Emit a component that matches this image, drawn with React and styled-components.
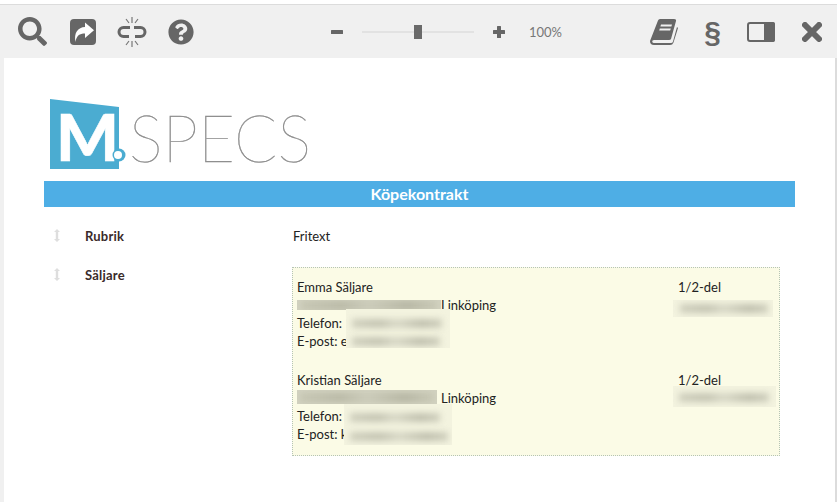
import styled, { createGlobalStyle } from 'styled-components'
import { FaSearch, FaQuestionCircle } from 'react-icons/fa'

const GlobalStyle = createGlobalStyle`
  html, body {
    margin: 0;
    padding: 0;
    background: #fff;
    overflow: hidden;
  }
  body {
    font-family: Lato, "Open Sans", sans-serif;
    font-size: 13px;
    color: #222;
  }
`

const Page = styled.div`
  width: 837px;
  height: 502px;
  display: flex;
  flex-direction: column;
  box-sizing: border-box;
  padding-top: 4px;
`

const Toolbar = styled.div`
  height: 54px;
  flex: none;
  box-sizing: border-box;
  border-top: 1px solid #dcdcdc;
  background: #f0f0f0;
  display: grid;
  grid-template-columns: 313px auto 1fr;
  align-items: center;
  padding: 0 15px 0 18px;
  color: #666;
`

const ToolGroup = styled.div`
  display: flex;
  align-items: center;
  gap: ${p => p.$gap}px;
  justify-content: ${p => p.$end ? 'flex-end' : 'flex-start'};
`

const ZoomGroup = styled.div`
  display: flex;
  align-items: center;
`

const Track = styled.div`
  width: 112px;
  height: 2px;
  margin: 0 19px;
  background: #e2e2e2;
  display: flex;
  align-items: center;
  padding-left: 52px;
  box-sizing: border-box;
`

const Thumb = styled.div`
  flex: none;
  width: 8px;
  height: 14px;
  background: #6a6a6a;
`

const Percent = styled.span`
  font-size: 13px;
  color: #777;
  margin-left: 24px;
`

const Paragraph = styled.span`
  width: 15px;
  display: flex;
  justify-content: center;
  font-family: "Liberation Sans", Arial, sans-serif;
  font-size: 30px;
  font-weight: 700;
  line-height: 30px;
  color: #666;
`

const Content = styled.div`
  flex: 1;
  box-sizing: border-box;
  border-left: 4px solid #f0f0f0;
  border-right: 2px solid #dcdcdc;
  padding: 28px 40px 0 40px;
`

const LogoWrap = styled.div`
  height: 95px;
  padding-left: 5px;
`

const Banner = styled.div`
  height: 26px;
  line-height: 26px;
  background: #4eaee5;
  color: #fff;
  font-size: 16px;
  font-weight: 700;
  text-align: center;
`

const Row = styled.div`
  display: grid;
  grid-template-columns: 41px 207px 1fr;
  margin-top: ${p => p.$top}px;
`

const Handle = styled.div`
  padding: 2px 0 0 10px;
  height: 18px;
`

const Label = styled.div`
  font-weight: 700;
  line-height: 18px;
  letter-spacing: 0.2px;
  color: #3a2a2a;
`

const Value = styled.div`
  line-height: 18px;
  padding-left: 1px;
`

const SellerBox = styled.div`
  position: relative;
  width: 488px;
  height: 189px;
  box-sizing: border-box;
  margin-top: 1px;
  border: 1px dotted #b5c4b5;
  background: #fbfbe6;
  padding: 10px 0 0 4px;
  line-height: 18px;
`

const Seller = styled.div`
  display: grid;
  grid-template-columns: 381px 1fr;
  margin-bottom: ${p => p.$bottom || 0}px;
`

const Line = styled.div`
  height: 18px;
  line-height: 18px;
  white-space: nowrap;
  padding-left: ${p => p.$indent || 0}px;
`

// smudged-out personal data lying over the text
const Redaction = styled.div`
  position: absolute;
  overflow: hidden;
  left: ${p => p.$x}px;
  top: ${p => p.$y}px;
  width: ${p => p.$w}px;
  height: ${p => p.$h}px;
  background: ${p => p.$dark ? '#d2d2c0' : '#f3f3df'};
`

const Smear = styled.div`
  position: absolute;
  left: ${p => p.$left}px;
  top: ${p => p.$top}px;
  width: ${p => p.$w}px;
  height: 9px;
  filter: blur(3px);
  background: ${p => p.$dark
    ? 'linear-gradient(90deg, #c6c6b3, #b9b9a6 30%, #cbcbb9 50%, #b5b5a2 78%, #c8c8b5)'
    : 'linear-gradient(90deg, #d0d0be, #c4c4b2 30%, #d8d8c6 50%, #c0c0ae 78%, #d0d0be)'};
`

function ShareIcon() {
  return (
    <svg width="26" height="26" viewBox="0 0 26 26">
      <rect width="26" height="26" rx="4" fill="#666" />
      <path d="M15 3.500l9 7.800-9 7.700v-4.500c-5.500 0-8.500 2-9.500 8.500C3.500 14 8 8.200 15 8z" fill="#fff" />
    </svg>
  )
}

function UnlinkIcon() {
  return (
    <svg width="26" height="30" viewBox="0 0 26 30" fill="none" stroke="#666" strokeWidth="3" style={{ overflow: 'visible' }}>
      <path d="M11 10.500H4.500a4.500 4.500 0 0 0 0 9H10M15 10.500h6.500a4.500 4.500 0 0 1 0 9H16" />
      <path d="M13 0v6M13 24v6M7 2l3 4M19 2l-3 4M7 28l3-4M19 28l-3-4" strokeWidth="1.200" stroke="#777" />
    </svg>
  )
}

function MinusIcon() {
  return (
    <svg width="12" height="12" viewBox="0 0 12 12">
      <rect y="4" width="12" height="4" rx="0.500" fill="#666" />
    </svg>
  )
}

function PlusIcon() {
  return (
    <svg width="12" height="12" viewBox="0 0 12 12" fill="#666">
      <rect y="4" width="12" height="4" rx="0.500" />
      <rect x="4" width="4" height="12" rx="0.500" />
    </svg>
  )
}

function BookIcon() {
  return (
    <svg width="28" height="26" viewBox="0 0 28 26">
      <path d="M8 1.500Q8.500 0 10 0h14q2.500 0 2 2L21 20q-.5 1-2 1H4q-2 0-1.800 1.500T4 24h17q1.500 0 2-1.500L27 8l1 1-4.500 14.500Q22.500 26 20 26H4Q0 26 0 22z" fill="#666" />
      <path d="M11 5.500h11l-.6 2H10.400zM9.800 9.500h11l-.6 2H9.200z" fill="#f0f0f0" />
    </svg>
  )
}

function PanelIcon() {
  return (
    <svg width="28" height="20" viewBox="0 0 28 20">
      <rect x="1" y="1" width="26" height="18" rx="2" fill="none" stroke="#666" strokeWidth="2" />
      <path d="M17 0h9a2 2 0 0 1 2 2v16a2 2 0 0 1-2 2h-9z" fill="#666" />
    </svg>
  )
}

function CloseIcon() {
  return (
    <svg width="20" height="20" viewBox="0 0 20 20">
      <path d="M3 3l14 14M17 3L3 17" stroke="#666" strokeWidth="6" strokeLinecap="round" />
    </svg>
  )
}

function MoveIcon() {
  return (
    <svg width="6" height="13" viewBox="0 0 6 13" fill="#dedede">
      <path d="M3 0l3 3H4.200v7H6l-3 3-3-3h1.800V3H0z" />
    </svg>
  )
}

function Logo() {
  return (
    <svg width="270" height="95" viewBox="0 -12 270 95">
      <path d="M1 1l69 8v62H1z" fill="#4bacd1" />
      <text x="7" y="63" fontFamily="Lato, sans-serif" fontWeight="900" fontSize="65" fill="#fff" stroke="#fff" strokeWidth="0.500" textLength="63" lengthAdjust="spacingAndGlyphs">M</text>
      <circle cx="70" cy="57" r="6.500" fill="#4bacd1" />
      <circle cx="69" cy="57" r="4" fill="#fff" />
      <text x="80" y="64" fontFamily="Lato, sans-serif" fontWeight="100" fontSize="65" fill="#8a8a8a" stroke="#8a8a8a" strokeWidth="0.400" textLength="182" lengthAdjust="spacingAndGlyphs">SPECS</text>
    </svg>
  )
}

export default function App() {
  return (
    <Page>
      <GlobalStyle />
      <Toolbar>
        <ToolGroup $gap={23}>
          <FaSearch size={29} />
          <ShareIcon />
          <UnlinkIcon />
          <FaQuestionCircle size={26} />
        </ToolGroup>
        <ZoomGroup>
          <MinusIcon />
          <Track><Thumb /></Track>
          <PlusIcon />
          <Percent>100%</Percent>
        </ZoomGroup>
        <ToolGroup $gap={27} $end>
          <BookIcon />
          <Paragraph>§</Paragraph>
          <PanelIcon />
          <CloseIcon />
        </ToolGroup>
      </Toolbar>
      <Content>
        <LogoWrap><Logo /></LogoWrap>
        <Banner>Köpekontrakt</Banner>
        <Row $top={20}>
          <Handle><MoveIcon /></Handle>
          <Label>Rubrik</Label>
          <Value>Fritext</Value>
        </Row>
        <Row $top={19}>
          <Handle><MoveIcon /></Handle>
          <Label>Säljare</Label>
          <SellerBox>
            <Seller $bottom={21}>
              <div>
                <Line>Emma Säljare</Line>
                <Line $indent={144}>Linköping</Line>
                <Line>Telefon:</Line>
                <Line>E-post: e</Line>
              </div>
              <div>
                <Line>1/2-del</Line>
              </div>
            </Seller>
            <Seller>
              <div>
                <Line>Kristian Säljare</Line>
                <Line $indent={144}>Linköping</Line>
                <Line>Telefon:</Line>
                <Line>E-post: k</Line>
              </div>
              <div>
                <Line>1/2-del</Line>
              </div>
            </Seller>

            <Redaction $x={4} $y={32} $w={144} $h={10} $dark>
              <Smear $left={4} $top={1} $w={136} $dark />
            </Redaction>
            <Redaction $x={53} $y={41} $w={104} $h={39}>
              <Smear $left={6} $top={10} $w={90} />
              <Smear $left={6} $top={28} $w={88} />
            </Redaction>
            <Redaction $x={380} $y={32} $w={100} $h={17}>
              <Smear $left={7} $top={4} $w={88} />
            </Redaction>

            <Redaction $x={4} $y={122} $w={140} $h={14} $dark>
              <Smear $left={3} $top={3} $w={134} $dark />
            </Redaction>
            <Redaction $x={51} $y={136} $w={108} $h={41}>
              <Smear $left={6} $top={9} $w={90} />
              <Smear $left={6} $top={28} $w={98} />
            </Redaction>
            <Redaction $x={380} $y={118} $w={103} $h={21}>
              <Smear $left={6} $top={7} $w={90} />
            </Redaction>
          </SellerBox>
        </Row>
      </Content>
    </Page>
  )
}
